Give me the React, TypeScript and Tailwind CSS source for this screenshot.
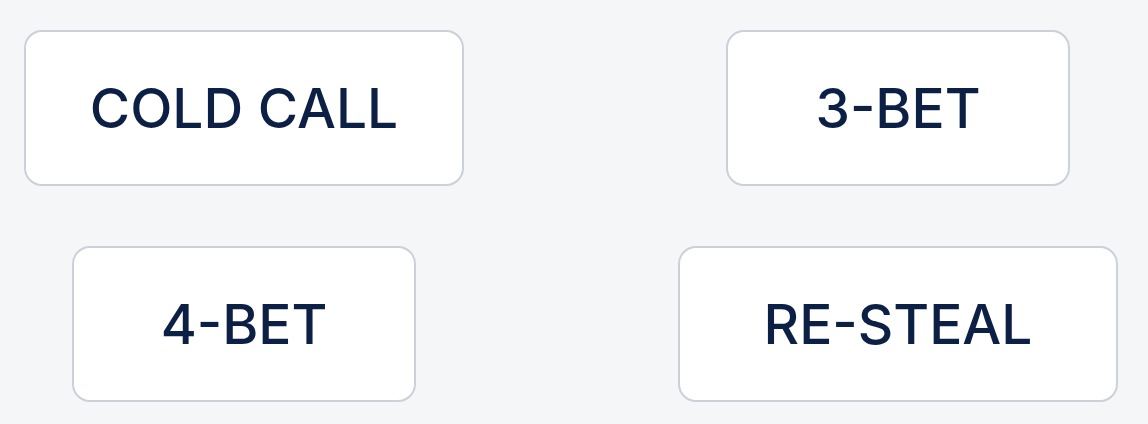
const options = [
  { label: "COLD CALL", w: "w-[440px]" },
  { label: "3-BET", w: "w-[344px]" },
  { label: "4-BET", w: "w-[344px]" },
  { label: "RE-STEAL", w: "w-[440px]" },
];

export default function App() {
  return (
    <main className="min-h-screen bg-[#f5f6f8] pl-6 pr-[30px] pt-[30px] font-['Inter',sans-serif]">
      <div className="grid grid-cols-[440px_440px] justify-between gap-y-[60px]">
        {options.map((o) => (
          <div key={o.label} className="flex justify-center">
            <button
              className={`${o.w} h-[156px] rounded-[18px] border-2 border-[#cbd0d9] bg-white text-[55px] font-medium text-[#0c1f44]`}
            >
              {o.label}
            </button>
          </div>
        ))}
      </div>
    </main>
  );
}
